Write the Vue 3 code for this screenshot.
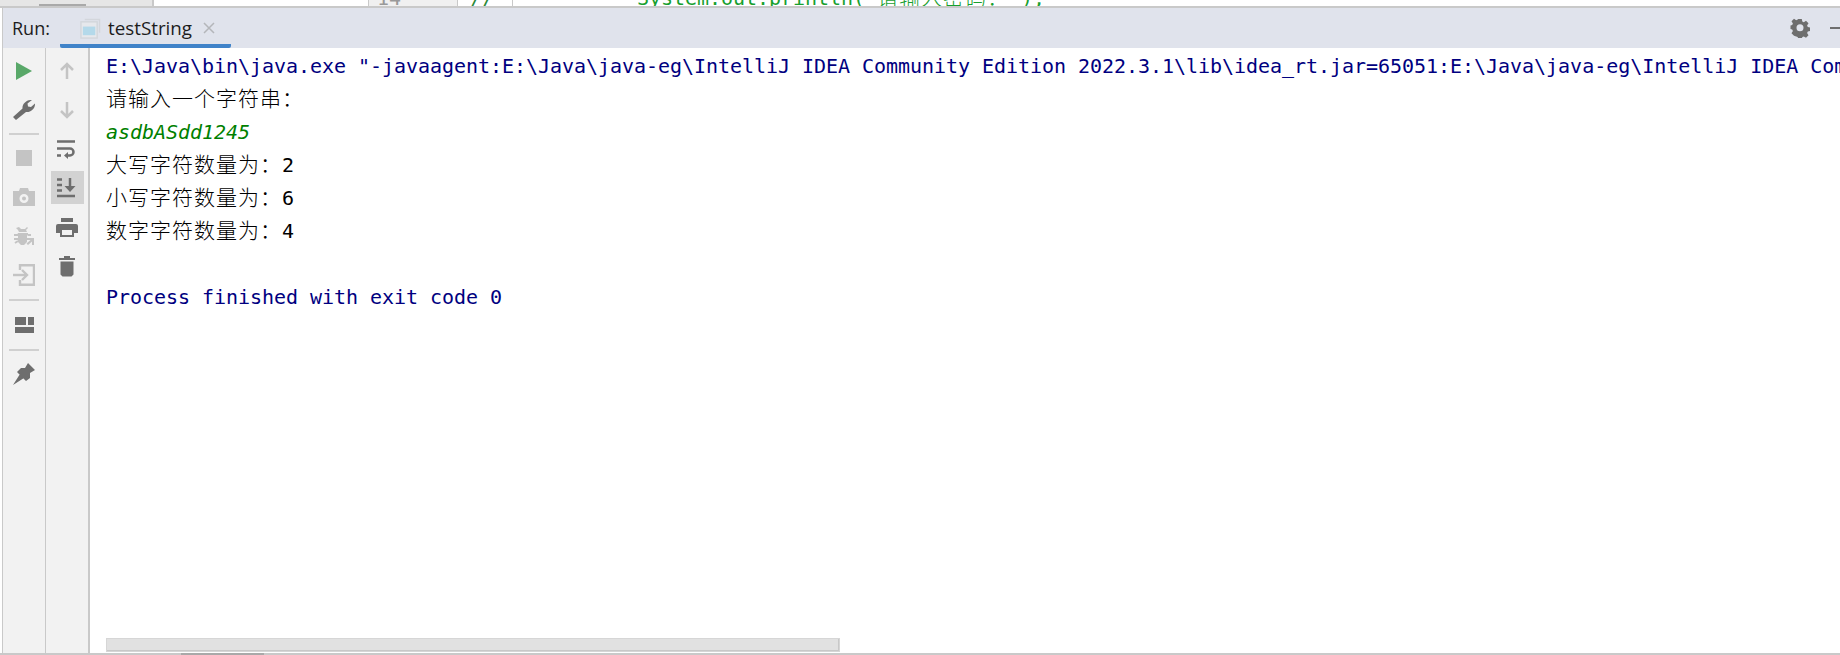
<template>
  <div class="page">
    <div class="strip">
      <div class="strip-left"><span class="strip-bar"></span></div>
      <div class="strip-gap"></div>
      <div class="gutter">14</div>
      <div class="marker">//</div>
      <div class="code">System.out.println("<span class="cjk">请输入密码：</span>");</div>
    </div>
    <div class="header">
      <span class="run-label">Run:</span>
      <div class="tab">
        <svg class="tab-icon" width="21" height="21" viewBox="0 0 22 22">
          <path d="M5 1.500h15.500v14" fill="none" stroke="#d3d6dc" stroke-width="1.500" />
          <rect x="1" y="4" width="17" height="17" fill="#e6e8ec" stroke="#d3d6dc" stroke-width="1.500" />
          <rect x="3" y="9" width="13" height="9" fill="#b4d9ea" />
        </svg>
        <span class="tab-title">testString</span>
        <svg class="tab-close" width="12" height="12" viewBox="0 0 12 12">
          <path d="M1 1l10 10M11 1L1 11" stroke="#b4b6ba" stroke-width="1.500" />
        </svg>
      </div>
      <div class="spacer"></div>
      <svg class="gear" width="20" height="20" viewBox="0 0 20 20">
        <path fill-rule="evenodd" fill="#6e6e6e" d="M8.200 1h3.600l.5 2.500 1.500.7 2.200-1.400 2.500 2.500-1.400 2.200.7 1.500 2.200.5v3.600l-2.200.5-.7 1.500 1.400 2.200-2.500 2.500-2.200-1.400-1.500.7-.5 1.900H8.200l-.5-1.900-1.500-.7L4 17.800l-2.500-2.500 1.400-2.200-.7-1.500-1.700-.5V7.500l1.700-.5.700-1.500L1.500 3.300 4 .8l2.200 1.400 1.500-.7zM10 6.300a3.500 3.500 0 1 0 0 7 3.500 3.500 0 0 0 0-7z" />
      </svg>
      <span class="minimize"></span>
    </div>
    <div class="body">
      <div class="bar bar-one">
        <button class="tool">
          <svg width="16" height="18" viewBox="0 0 16 18"><path d="M0 0l16 9-16 9z" fill="#59a869" /></svg>
        </button>
        <button class="tool">
          <svg width="22" height="20" viewBox="0 0 22 20"><path d="M0 17L9.500 8.500C9 4 13.500-.5 19-.0L14.500 3.500l.5 3 3 .5L22 3.500c.3 5-4 9-9 8.500L3 20z" fill="#6e6e6e" /></svg>
        </button>
        <span class="sep sep-first"></span>
        <button class="tool">
          <span class="stop"></span>
        </button>
        <button class="tool">
          <svg width="22" height="20" viewBox="0 0 22 20"><path fill-rule="evenodd" fill="#c4c4c4" d="M0 4h6l1-3h8l1 3h6v15H0zM11 7a4.500 4.500 0 1 0 0 9 4.500 4.500 0 0 0 0-9zm0 2.500a2 2 0 1 1 0 4 2 2 0 0 1 0-4z" /></svg>
        </button>
        <button class="tool">
          <svg width="22" height="22" viewBox="0 0 22 22"><path d="M6 2l2 2h4l2-2 1 1-2 2 1 2H6L5 5 3 3zM5 8h10v2l-1 1v6l-3 3h-3l-3-3v-6l-1-1z" fill="#c4c4c4" /><path d="M1 10h4M1 14h4M15 10h3M2 18l3-2" stroke="#c4c4c4" stroke-width="2" /><path d="M14 13h7v7h-2v-3.500L15 20l-1.500-1.500 4-3.500H14z" fill="#c4c4c4" /></svg>
        </button>
        <button class="tool">
          <svg width="22" height="22" viewBox="0 0 22 22"><path d="M7 6V1.200h14v19.600H7V16" fill="none" stroke="#c4c4c4" stroke-width="2.400" /><path d="M0 11h13" stroke="#c4c4c4" stroke-width="2.400" /><path d="M9 6l5 5-5 5" fill="none" stroke="#c4c4c4" stroke-width="2.400" /></svg>
        </button>
        <span class="sep"></span>
        <button class="tool">
          <svg width="19" height="16" viewBox="0 0 19 16"><path d="M0 0h11v8H0zM13 0h6v8h-6zM0 10h19v6H0z" fill="#6e6e6e" /></svg>
        </button>
        <span class="sep sep-last"></span>
        <button class="tool">
          <svg width="22" height="22" viewBox="0 0 22 22"><path d="M15 0l7 7-5 3v5l-4 3-9-9 4-4h4zM0 22l7-11 4 4z" fill="#6e6e6e" /></svg>
        </button>
      </div>
      <div class="bar bar-two">
        <button class="tool">
          <svg width="16" height="20" viewBox="0 0 16 20"><path d="M8 18V3M2 9l6-6 6 6" fill="none" stroke="#c4c4c4" stroke-width="2.500" /></svg>
        </button>
        <button class="tool">
          <svg width="16" height="20" viewBox="0 0 16 20"><path d="M8 2v15M2 11l6 6 6-6" fill="none" stroke="#c4c4c4" stroke-width="2.500" /></svg>
        </button>
        <button class="tool low">
          <svg width="20" height="20" viewBox="0 0 20 20"><path d="M0 1.500h18M0 8.500h13a3.500 3.500 0 0 1 0 7H9M0 15.500h4" fill="none" stroke="#6e6e6e" stroke-width="2.500" /><path d="M11 12l-4 3.500 4 3.500z" fill="#6e6e6e" /></svg>
        </button>
        <button class="tool active">
          <svg width="20" height="20" viewBox="0 0 20 20"><path d="M0 1.500h5M0 7h5M0 12.500h5M0 18h18" fill="none" stroke="#6e6e6e" stroke-width="2.500" /><path d="M13 0v9" stroke="#6e6e6e" stroke-width="2.500" /><path d="M7.500 8h11L13 14z" fill="#6e6e6e" /></svg>
        </button>
        <button class="tool low">
          <svg width="22" height="20" viewBox="0 0 22 20"><path fill-rule="evenodd" d="M5 0h12v4H5zM2 6h18a2 2 0 0 1 2 2v7h-4v4H4v-4H0V8a2 2 0 0 1 2-2zM6 12v5h10v-5z" fill="#6e6e6e" /></svg>
        </button>
        <button class="tool">
          <svg width="16" height="22" viewBox="0 0 16 22"><path d="M0 3h5V1h6v2h5v2H0zM1.500 6.500h13v13l-2 2h-9l-2-2z" fill="#6e6e6e" /></svg>
        </button>
      </div>
      <div class="console">
        <div class="output">
          <div class="line sys">E:\Java\bin\java.exe "-javaagent:E:\Java\java-eg\IntelliJ IDEA Community Edition 2022.3.1\lib\idea_rt.jar=65051:E:\Java\java-eg\IntelliJ IDEA Community Edition 2022.3.1\bin"</div>
          <div class="line"><span class="cjk">请输入一个字符串：</span></div>
          <div class="line input">asdbASdd1245</div>
          <div class="line"><span class="cjk">大写字符数量为：</span>2</div>
          <div class="line"><span class="cjk">小写字符数量为：</span>6</div>
          <div class="line"><span class="cjk">数字字符数量为：</span>4</div>
          <div class="line"> </div>
          <div class="line sys">Process finished with exit code 0</div>
        </div>
        <div class="scrollbar"></div>
      </div>
    </div>
    <div class="footer"><span class="footer-thumb"></span></div>
  </div>
</template>

<script setup>
</script>

<style>
html, body { margin: 0; background: #fff; overflow: hidden; }
</style>

<style scoped>
.page { width: 1840px; height: 655px; display: flex; flex-direction: column; overflow: hidden; background: #fff; }
.strip { height: 8px; flex: none; display: flex; overflow: hidden; background: #fff; border-bottom: 2px solid #c9c9c9; box-sizing: border-box; }
.strip-left { width: 154px; box-sizing: border-box; background: #e6e6e6; border-right: 2px solid #c9c9c9; position: relative; }
.strip-bar { position: absolute; left: 39px; top: 4px; width: 47px; height: 2px; background: #a9a9a9; }
.strip-gap { width: 214px; }
.gutter { width: 90px; background: #f0f0f0; border-left: 1px solid #c9c9c9; border-right: 1px solid #c9c9c9; font: 20px/14px "DejaVu Sans Mono", monospace; color: #999; padding-left: 8px; margin-top: -9px; height: 15px; box-sizing: border-box; }
.marker { width: 55px; border-right: 1px solid #c9c9c9; font: 20px/14px "DejaVu Sans Mono", monospace; color: #2a8a3a; padding-left: 12px; margin-top: -9px; height: 15px; box-sizing: border-box; }
.code { margin-left: 124px; font: 20px/14px "DejaVu Sans Mono", "Noto Sans CJK SC", monospace; letter-spacing: -0.04px; color: #17a02f; margin-top: -9px; height: 15px; white-space: pre; }
.header { height: 40px; flex: none; display: flex; align-items: center; margin-left: 2px; border-left: 1px solid #c9c9c9; background: #e0e3ec; font-family: "Open Sans", "Noto Sans", sans-serif; color: #1c1c1c; }
.run-label { font-size: 18px; margin-left: 9px; width: 48px; }
.tab { width: 171px; height: 40px; box-sizing: border-box; display: flex; align-items: center; padding: 4px 0 0 20px; border-bottom: 4px solid #4083c9; border-radius: 0 0 2px 2px; }
.tab-icon { flex: none; }
.tab-title { font-size: 18.800px; margin-left: 7px; }
.tab-close { margin-left: 11px; flex: none; }
.spacer { flex: 1; }
.gear { margin-right: 20px; flex: none; }
.minimize { width: 10px; height: 2px; background: #6e6e6e; }
.body { flex: 1; min-height: 0; display: flex; }
.bar { flex: none; width: 44px; display: flex; flex-direction: column; align-items: center; background: #f2f2f2; box-sizing: border-box; padding-top: 3px; }
.bar-one { margin-left: 2px; border-left: 1px solid #c9c9c9; border-right: 1px solid #c9c9c9; }
.bar-two { border-right: 2px solid #c9c9c9; }
.tool { width: 33px; height: 33px; flex: none; margin: 3px 0; padding: 0; border: 0; background: none; display: flex; align-items: center; justify-content: center; }
.tool.low { padding-top: 3px; box-sizing: border-box; }
.tool.active { background: #d2d2d2; }
.stop { width: 16px; height: 16px; background: #c4c4c4; }
.sep { width: 30px; height: 2px; background: #d0d0d0; margin: 5px 0 4px; flex: none; }
.sep-first { margin: 4px 0 3px; }
.sep-last { margin: 5px 0 3px; }
.console { flex: 1; min-width: 0; position: relative; background: #fff; padding-left: 16px; overflow: hidden; }
.output { padding-top: 2px; font: 20px/33px "DejaVu Sans Mono", "Noto Sans CJK SC", monospace; letter-spacing: -0.04px; color: #000; white-space: pre; }
.line { height: 33px; }
.cjk { font-family: "Noto Sans CJK SC", sans-serif; font-size: 21px; line-height: 0; letter-spacing: 1px; font-weight: 300; }
.sys { color: #000080; }
.input { color: #008000; font-style: italic; }
.scrollbar { position: absolute; left: 16px; bottom: 1px; width: 734px; height: 14px; background: #e1e1e1; border: 1px solid #d6d6d6; box-shadow: inset -1px -1px 0 #c8c8c8; box-sizing: border-box; }
.footer { height: 2px; flex: none; background: #c9c9c9; display: flex; }
.footer-thumb { width: 83px; margin-left: 181px; background: #a9a9a9; }
</style>
